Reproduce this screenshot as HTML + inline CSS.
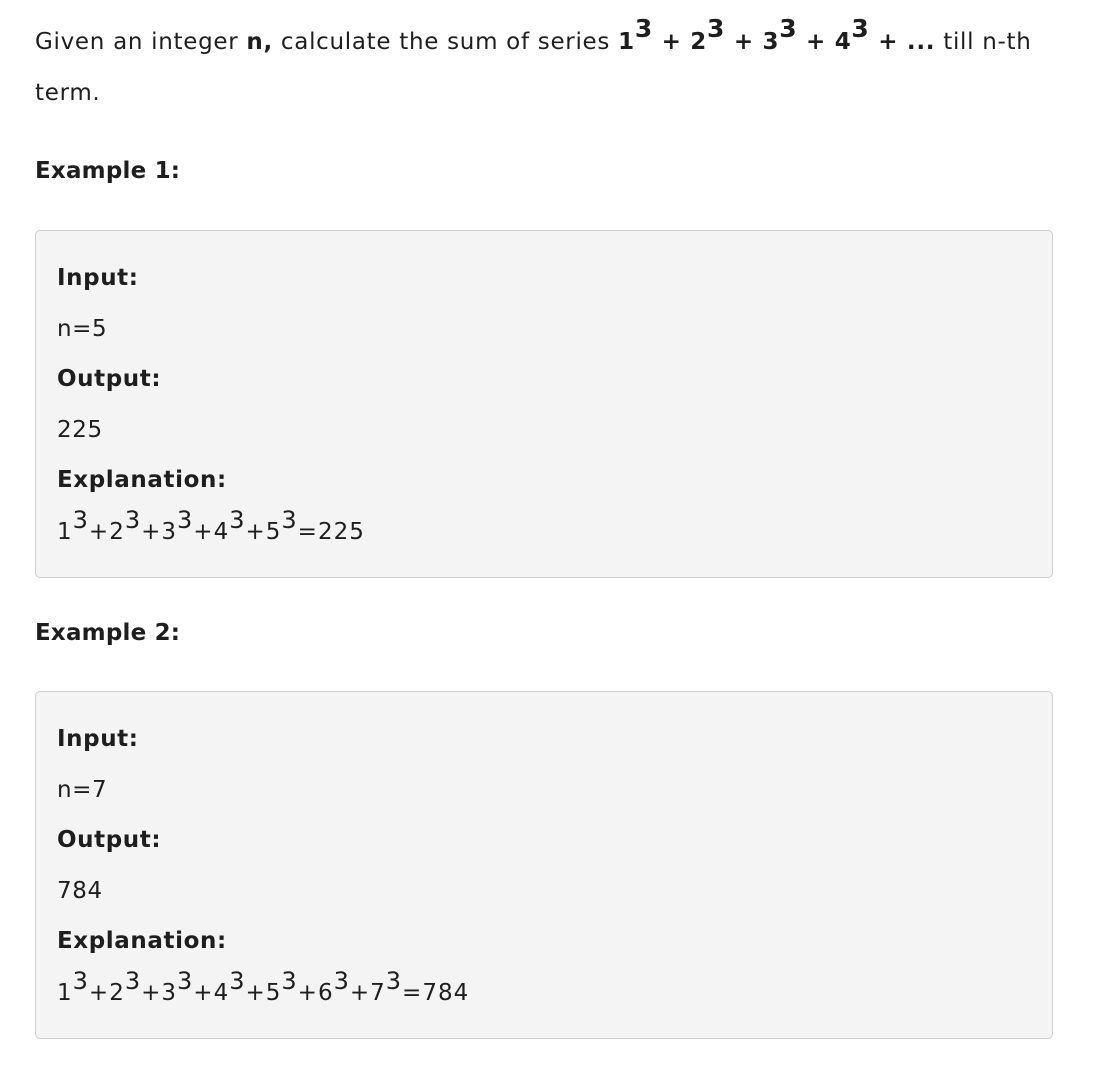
<!DOCTYPE html>
<html><head><meta charset="utf-8"><style>
body{margin:0;background:#fff;width:1094px;height:1074px;position:relative;font-family:"DejaVu Sans","Liberation Sans",sans-serif;color:#1e1e1e;}
.t{position:absolute;left:35px;font-size:23px;white-space:nowrap;line-height:1;letter-spacing:0.7px}
.b{font-weight:bold;letter-spacing:0.2px}
.box{position:absolute;left:35px;width:1016px;background:#f4f4f4;border:1.5px solid #cfcfcf;border-radius:5px}
.in{position:absolute;left:21px;font-size:23px;white-space:nowrap;line-height:1;letter-spacing:0.6px}
sup{font-size:22px;position:relative;top:-3px;vertical-align:super;line-height:0}
.h sup{font-size:25px;font-weight:bold}
.f{letter-spacing:1px}
.f sup{font-size:24px;top:-2px}
</style></head><body>
<div class="t h" style="top:31px">Given an integer <b>n,</b> calculate the sum of series <b>1<sup>3</sup> + 2<sup>3</sup> + 3<sup>3</sup> + 4<sup>3</sup> + ...</b> till n-th</div>
<div class="t" style="top:82px">term.</div>
<div class="t b" style="top:160px">Example 1:</div>
<div class="box" style="top:230px;height:346px">
<div class="in b" style="top:36px">Input:</div>
<div class="in" style="top:87px">n=5</div>
<div class="in b" style="top:137px">Output:</div>
<div class="in" style="top:188px">225</div>
<div class="in b" style="top:238px">Explanation:</div>
<div class="in f" style="top:290px">1<sup>3</sup>+2<sup>3</sup>+3<sup>3</sup>+4<sup>3</sup>+5<sup>3</sup>=225</div>
</div>
<div class="t b" style="top:622px">Example 2:</div>
<div class="box" style="top:691px;height:346px">
<div class="in b" style="top:36px">Input:</div>
<div class="in" style="top:87px">n=7</div>
<div class="in b" style="top:137px">Output:</div>
<div class="in" style="top:188px">784</div>
<div class="in b" style="top:238px">Explanation:</div>
<div class="in f" style="top:290px">1<sup>3</sup>+2<sup>3</sup>+3<sup>3</sup>+4<sup>3</sup>+5<sup>3</sup>+6<sup>3</sup>+7<sup>3</sup>=784</div>
</div>
</body></html>
